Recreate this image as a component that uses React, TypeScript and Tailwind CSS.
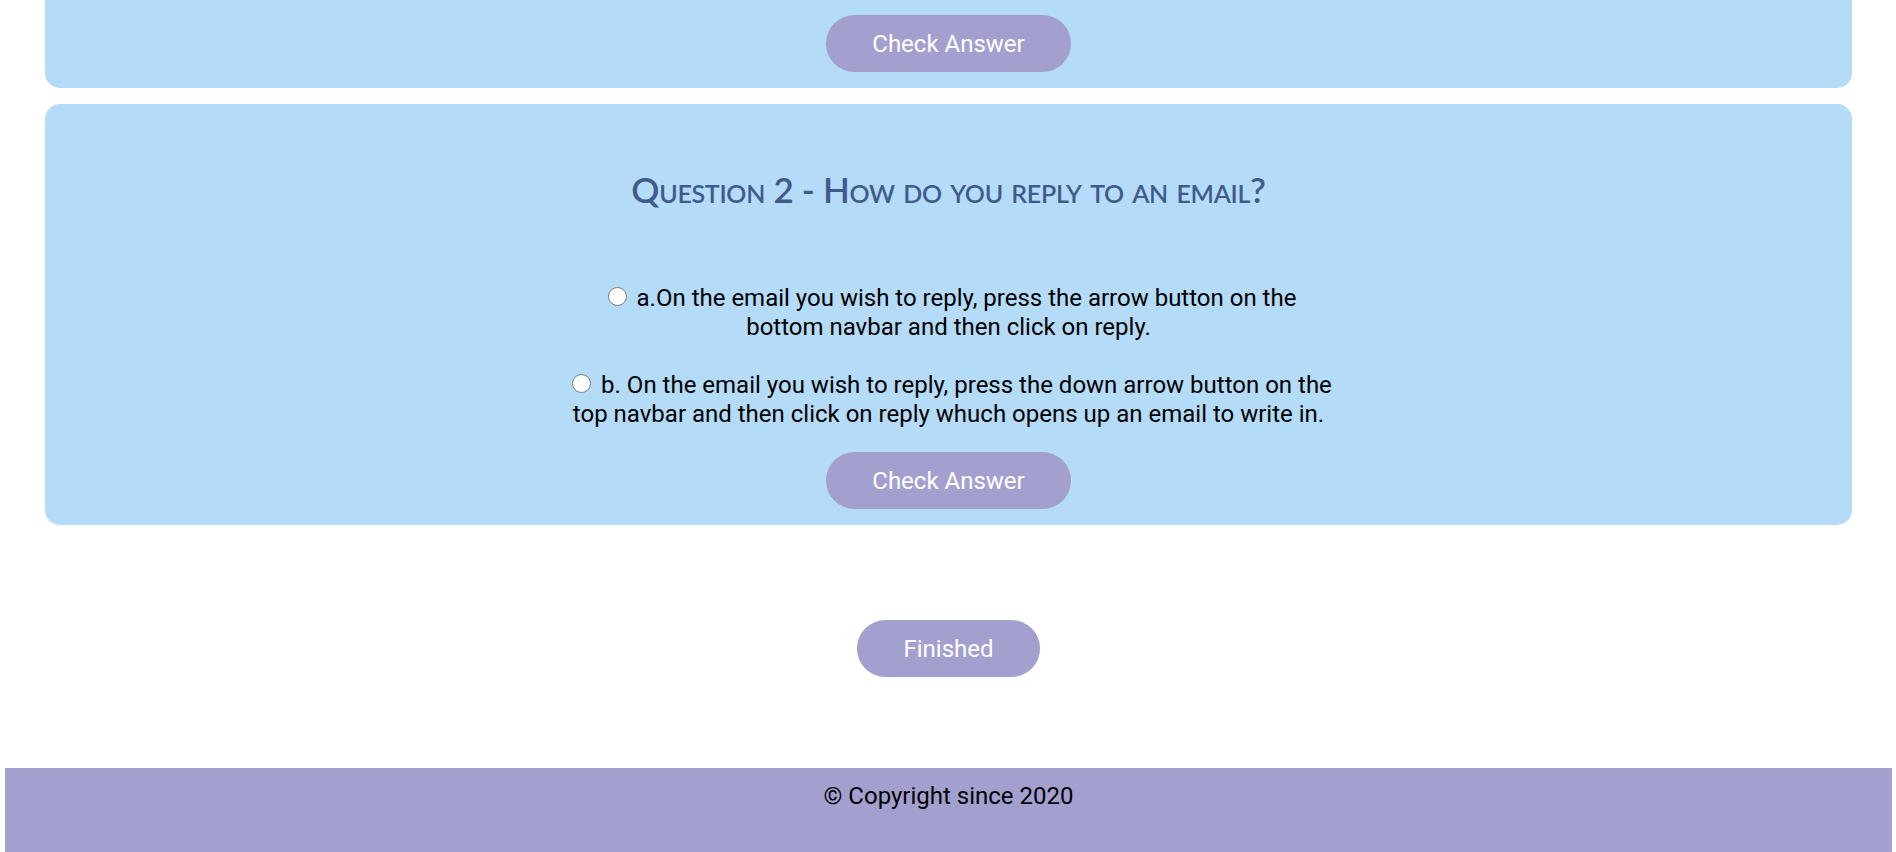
import React from "react";

const CheckButton = ({ label }: { label: string }) => (
  <button
    type="button"
    className="h-[57px] px-[46px] rounded-full bg-[#a3a0d0] text-white text-[24px] leading-[28px] font-['Roboto',sans-serif]"
  >
    {label}
  </button>
);

const Option = ({ name, text }: { name: string; text: string }) => (
  <label className="block">
    <input
      type="radio"
      name={name}
      className="w-[19px] h-[19px] ml-[7px] mr-[4px] my-0 align-baseline"
    />{" "}
    {text}
  </label>
);

export default function App() {
  return (
    <div className="min-h-[852px] bg-white font-['Roboto',sans-serif] text-black pl-[5px] pr-[4px] flex flex-col">
      {/* bottom of question 1, scrolled off the top */}
      <div className="mx-[40px] h-[88px] rounded-b-[15px] bg-[#b4dbf7] flex items-end justify-center pb-[16px]">
        <CheckButton label="Check Answer" />
      </div>

      <div className="mx-[40px] mt-[16px] rounded-[15px] bg-[#b4dbf7] pt-[64px] pb-[16px] flex flex-col items-center">
        <h2 className="font-['Lato',sans-serif] [font-variant:small-caps] text-[35px] leading-[1.2] font-semibold tracking-[-0.3px] text-[#405b8b]">
          Question 2 - How do you reply to an email?
        </h2>
        <div className="mt-[74px] w-[772px] text-center text-[24px] leading-[29px]">
          <Option
            name="q2"
            text="a.On the email you wish to reply, press the arrow button on the bottom navbar and then click on reply."
          />
          <br />
          <Option
            name="q2"
            text="b. On the email you wish to reply, press the down arrow button on the top navbar and then click on reply whuch opens up an email to write in."
          />
        </div>
        <div className="mt-[23px]">
          <CheckButton label="Check Answer" />
        </div>
      </div>

      <div className="flex justify-center mt-[95px]">
        <CheckButton label="Finished" />
      </div>

      <footer className="mt-[91px] h-[84px] bg-[#a3a0d0] pt-[14px] text-center text-[24px] leading-[28px]">
        © Copyright since 2020
      </footer>
    </div>
  );
}
